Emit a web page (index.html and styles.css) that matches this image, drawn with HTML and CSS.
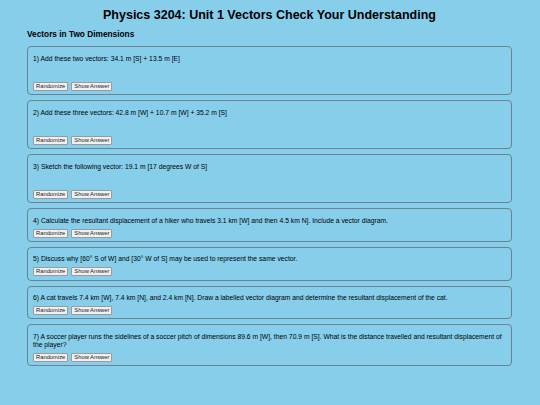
FILE: index.html
```html
<!DOCTYPE html>
<html>
<head>
<meta charset="utf-8">
<link rel="stylesheet" href="styles.css">
</head>
<body>
<div class="page">
  <h1 class="title">Physics 3204: Unit 1 Vectors Check Your Understanding</h1>
  <h2 class="section">Vectors in Two Dimensions</h2>
  <div class="list">
    <div class="card">
      <p class="q">1) Add these two vectors: 34.1 m [S] + 13.5 m [E]</p>
      <div class="space"></div>
      <div class="btns"><button class="btn">Randomize</button><button class="btn">Show Answer</button></div>
    </div>
    <div class="card">
      <p class="q">2) Add these three vectors: 42.8 m [W] + 10.7 m [W] + 35.2 m [S]</p>
      <div class="space"></div>
      <div class="btns"><button class="btn">Randomize</button><button class="btn">Show Answer</button></div>
    </div>
    <div class="card">
      <p class="q">3) Sketch the following vector: 19.1 m [17 degrees W of S]</p>
      <div class="space"></div>
      <div class="btns"><button class="btn">Randomize</button><button class="btn">Show Answer</button></div>
    </div>
    <div class="card">
      <p class="q">4) Calculate the resultant displacement of a hiker who travels 3.1 km [W] and then 4.5 km N]. Include a vector diagram.</p>
      <div class="btns"><button class="btn">Randomize</button><button class="btn">Show Answer</button></div>
    </div>
    <div class="card">
      <p class="q">5) Discuss why [60° S of W] and [30° W of S] may be used to represent the same vector.</p>
      <div class="btns"><button class="btn">Randomize</button><button class="btn">Show Answer</button></div>
    </div>
    <div class="card">
      <p class="q">6) A cat travels 7.4 km [W], 7.4 km [N], and 2.4 km [N]. Draw a labelled vector diagram and determine the resultant displacement of the cat.</p>
      <div class="btns"><button class="btn">Randomize</button><button class="btn">Show Answer</button></div>
    </div>
    <div class="card">
      <p class="q">7) A soccer player runs the sidelines of a soccer pitch of dimensions 89.6 m [W], then 70.9 m [S]. What is the distance travelled and resultant displacement of the player?</p>
      <div class="btns"><button class="btn">Randomize</button><button class="btn">Show Answer</button></div>
    </div>
  </div>
</div>
</body>
</html>
```

FILE: styles.css
```css
html, body {
  margin: 0;
  padding: 0;
  background: #87ceeb;
}
body {
  font-family: "Liberation Sans", Arial, sans-serif;
  color: #000;
}
.page {
  padding: 8px 28px 0 27px;
}
.title {
  margin: 0;
  font-size: 12.5px;
  line-height: 15px;
  text-align: center;
  font-weight: bold;
}
.section {
  margin: 6px 0 7px 0;
  font-size: 8.3px;
  line-height: 10px;
  font-weight: bold;
}
.list {
  display: flex;
  flex-direction: column;
  gap: 5px;
}
.card {
  border: 1.5px solid #6b8391;
  border-radius: 4px;
  padding: 7.5px 5px 3.25px 5px;
  display: flex;
  flex-direction: column;
  gap: 4px;
}
.q {
  margin: 0;
  font-size: 6.75px;
  line-height: 8px;
}
.space {
  height: 11.25px;
}
.btns {
  display: flex;
  gap: 3px;
}
.btn {
  font-family: "Liberation Sans", Arial, sans-serif;
  font-size: 5.8px;
  line-height: 7px;
  height: 9px;
  padding: 0 2px;
  margin: 0;
  background: #f0f0f0;
  color: #222;
  border: 1px solid #9a9a9a;
  border-radius: 1px;
}
```
